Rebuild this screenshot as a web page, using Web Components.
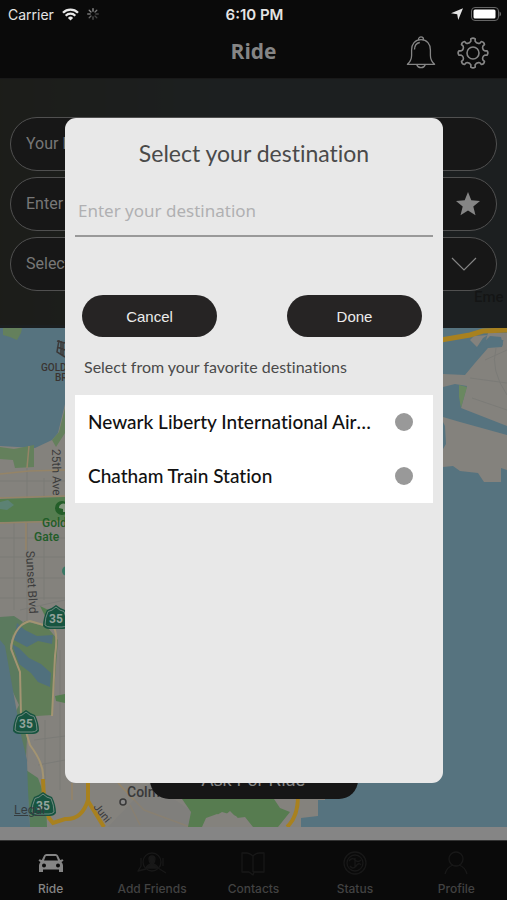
<!DOCTYPE html>
<html lang="en">
<head>
<meta charset="utf-8">
<meta name="viewport" content="width=device-width, initial-scale=1">
<title>Ride</title>
<style>
  html, body { margin: 0; height: 100%; background: #0a0a0a; }
  body { font-family: Roboto, "Liberation Sans", sans-serif; color: #858585; font-variant-ligatures: none; }
</style>
</head>
<body>
<ride-app></ride-app>

<template id="t-app">
  <style>
    :host { display: flex; flex-direction: column; min-height: 100vh; position: relative; }
    main { flex: 1; display: grid; grid-template-rows: 1fr; background: #858585; padding-bottom: 13px; }
    main > * { grid-area: 1 / 1; }
    .layer { display: flex; flex-direction: column; justify-content: space-between; z-index: 1; }
    form { display: flex; flex-direction: column; gap: 6px; padding: 38px 10px 37px; background: rgba(22, 23, 23, .91); }
    .foot { display: grid; grid-template-columns: 1fr auto 1fr; align-items: end; padding: 0 0 28px; }
    .ask { grid-column: 2; }
    .scrim { position: absolute; inset: 0; z-index: 2; display: flex; padding: 118px 64px 117px 65px; }
    destination-dialog { flex: 1; min-width: 0; }
  </style>
  <phone-status></phone-status>
  <nav-header>Ride</nav-header>
  <main>
    <city-map></city-map>
    <div class="layer">
      <form>
        <ride-field label="Your location"></ride-field>
        <ride-field label="Enter destination" icon="star"></ride-field>
        <ride-field label="Select" icon="chevron"></ride-field>
      </form>
      <div class="foot"><pill-button class="ask" kind="ask">Ask For Ride</pill-button></div>
    </div>
  </main>
  <tab-bar>
    <tab-item icon="car" active>Ride</tab-item>
    <tab-item icon="friends">Add Friends</tab-item>
    <tab-item icon="book">Contacts</tab-item>
    <tab-item icon="status">Status</tab-item>
    <tab-item icon="person">Profile</tab-item>
  </tab-bar>
  <div class="scrim"><destination-dialog></destination-dialog></div>
</template>

<template id="t-status">
  <style>
    :host { display: grid; grid-template-columns: 1fr auto 1fr; align-items: center; height: 28px; padding: 0 6px 0 8px; background: #0a0a0a; color: #e4e4e4; font: 14px Inter, "Liberation Sans", sans-serif; }
    div { display: flex; align-items: center; gap: 8px; }
    .end { justify-content: flex-end; }
    b { font-weight: 600; font-size: 15px; }
    svg { display: block; }
  </style>
  <div>
    <span>Carrier</span>
    <svg width="17" height="13" viewBox="0 0 17 13" fill="none" stroke="#e8e8e8" stroke-width="2.3"><path d="M1 4.8a10.6 10.6 0 0 1 15 0M3.7 7.7a6.8 6.8 0 0 1 9.6 0"/><path d="M8.5 12.6 5.9 9.900a3.700 3.700 0 0 1 5.200 0z" fill="#e8e8e8" stroke="none"/></svg>
    <svg width="12" height="12" viewBox="-6 -6 12 12" stroke="#999" stroke-width="1.3" stroke-linecap="round"><path d="M0-2.8V-5.3"/><path d="M2-2 3.8-3.8" stroke="#777"/><path d="M2.8 0H5.3" stroke="#444"/><path d="M2 2 3.8 3.8" stroke="#444"/><path d="M0 2.8V5.3" stroke="#555"/><path d="M-2 2-3.8 3.8" stroke="#666"/><path d="M-2.8 0H-5.3" stroke="#777"/><path d="M-2-2-3.8-3.8" stroke="#888"/></svg>
  </div>
  <b>6:10 PM</b>
  <div class="end">
    <svg width="12" height="12" viewBox="0 0 12 12" fill="#e4e4e4"><path d="M12 .2 7.200 12 6.200 6.200 0 5.200z"/></svg>
    <svg width="30" height="14" viewBox="0 0 30 14"><rect x=".5" y=".5" width="27" height="13" rx="3.500" fill="none" stroke="#666"/><rect x="2.500" y="2.500" width="22" height="9" rx="1.500" fill="#fff"/><path d="M28.500 4.500a2.800 2.800 0 0 1 0 5z" fill="#666"/></svg>
  </div>
</template>

<template id="t-nav">
  <style>
    :host { display: grid; grid-template-columns: 1fr auto 1fr; align-items: center; height: 51px; padding: 0 17px; background: #0a0a0a; border-bottom: 1px solid #191919; box-sizing: border-box; }
    h1 { grid-column: 2; margin: 0; padding-bottom: 4px; font: 700 21px/28px "Open Sans", "Noto Sans", sans-serif; color: #858585; }
    div { display: flex; justify-content: flex-end; gap: 20px; }
    button { padding: 0; border: 0; background: none; color: #858585; }
    svg { display: block; }
  </style>
  <h1><slot></slot></h1>
  <div>
    <button aria-label="Notifications"><svg width="30" height="34" viewBox="0 0 30 34" fill="none" stroke="currentColor" stroke-width="1.3" stroke-linejoin="round"><path d="M12.500 4.300V3.400a2.500 2.500 0 0 1 5 0v.9M15 3.700c-6 0-9.400 4.400-9.400 10.200v5.600c0 4-1.600 6.500-4.200 8.800h27.200c-2.600-2.300-4.200-4.800-4.200-8.800v-5.600C24.400 8.100 21 3.700 15 3.700zM10.700 28.500a4.500 4.500 0 0 0 8.600 0M8.500 13.500c0-3.400 2-6.400 5.300-7"/></svg></button>
    <button aria-label="Settings"><svg id="gear" width="34" height="34" viewBox="-17 -17 34 34" fill="none" stroke="currentColor" stroke-width="1.6" stroke-linejoin="round"><path d=""/><circle r="6"/></svg></button>
  </div>
</template>

<template id="t-field">
  <style>
    :host { display: flex; align-items: center; box-sizing: border-box; height: 54px; padding: 0 15px; border: 1px solid #505050; border-radius: 27px; background: #171717; }
    input, select { flex: 1; min-width: 0; height: 38px; padding: 0 0 2px; border: 0; outline: 0; appearance: none; background: none; color: #777; font: 16px Roboto, sans-serif; }
    input::placeholder { color: #777; opacity: 1; }
    button { padding: 0; border: 0; background: none; }
    svg { display: block; }
  </style>
</template>

<template id="t-pill">
  <style>
    :host { display: block; }
    button { display: block; box-sizing: border-box; width: 135px; height: 42px; padding: 0; border: 0; border-radius: 21px; background: #262424; color: #ececec; font: 15px "Liberation Sans", Arial, sans-serif; }
    :host([kind=ask]) button { width: 208px; height: 38px; border-radius: 19px; background: #161616; color: #858585; font-size: 18px; }
  </style>
  <button type="button"><slot></slot></button>
</template>

<template id="t-tabs">
  <style>
    :host { display: grid; grid-template-columns: repeat(5, 1fr); height: 60px; background: #0a0a0a; border-top: 1px solid #333; box-sizing: border-box; }
  </style>
  <slot></slot>
</template>

<template id="t-tab">
  <style>
    :host { display: block; color: #424242; --ink: #181818; }
    :host([active]) { color: #858585; --ink: #858585; }
    a { display: flex; flex-direction: column; align-items: center; gap: 5px; padding-top: 7px; color: inherit; text-decoration: none; font: 500 12px/16px Inter, sans-serif; white-space: nowrap; }
    svg { display: block; color: var(--ink); }
  </style>
</template>

<template id="t-dialog">
  <style>
    :host { display: flex; flex-direction: column; box-sizing: border-box; padding: 20px 10px; border-radius: 11px; background: #e8e8e8; font-family: Lato, sans-serif; color: #4a4a4a; }
    h2 { margin: 0; text-align: center; font: 400 23px/30px Lato, sans-serif; font-variant-ligatures: none; }
    input { box-sizing: border-box; width: 100%; height: 51px; margin-top: 18px; padding: 0 3px; border: 0; border-bottom: 2px solid #999; outline: 0; background: none; font: 17px "Noto Sans", sans-serif; }
    input::placeholder { color: #b0b0b2; opacity: 1; }
    .actions { display: flex; justify-content: space-between; padding: 58px 11px 0 7px; }
    p { margin: 20px 0 18px; padding: 0 9px; font-size: 16px; line-height: 20px; }
  </style>
  <h2 id="title">Select your destination</h2>
  <input type="text" aria-labelledby="title" placeholder="Enter your destination">
  <div class="actions"><pill-button>Cancel</pill-button><pill-button>Done</pill-button></div>
  <p>Select from your favorite destinations</p>
  <favorite-list></favorite-list>
</template>

<template id="t-favorites">
  <style>
    :host { display: block; background: #fff; color: #111; }
    label { display: flex; align-items: center; gap: 18px; height: 54px; padding: 0 20px 0 13px; font: 500 19px/26px Lato, sans-serif; font-variant-ligatures: none; }
    span { flex: 1; min-width: 0; overflow: hidden; white-space: nowrap; text-overflow: ellipsis; }
    input { appearance: none; flex: none; width: 18px; height: 18px; margin: 0; border-radius: 50%; background: #999; }
    input:checked { background: #262424; }
  </style>
  <label><span>Newark Liberty International Airport</span><input type="radio" name="favorite"></label>
  <label><span>Chatham Train Station</span><input type="radio" name="favorite"></label>
</template>

<template id="t-map">
  <style>
    :host { display: block; position: relative; overflow: hidden; min-height: 0; background: #56737f; }
    svg { position: absolute; inset: 0; width: 100%; height: 100%; display: block; }
    .legal { position: absolute; left: 14px; bottom: 9px; color: #353c3f; font: 12px/16px Inter, sans-serif; }
  </style>
  <svg viewBox="0 79 507 748" preserveAspectRatio="xMidYMid slice" font-family="Roboto, sans-serif">
    <defs><linearGradient id="hill"><stop offset="0" stop-color="#5c5a35"/><stop offset="1" stop-color="#56737f"/></linearGradient></defs>
    <rect y="79" width="507" height="748" fill="#56737f"/>
    <path d="M0 79H240V325H0z" fill="url(#hill)"/>
    <path d="M3 328h19l-1 5-4 7-7-3-7-2z" fill="#64805c"/>
    <!-- peninsula -->
    <path d="M0 446 35 448 52 440 58 433 65 404 V400 H325 V800 L318 800 V816 L301 818 V827 H30 L24 790 12 690 0 640z" fill="#84827d"/>
    <path d="M0 447 14 449 34 445 34 467 15 468 13 460 0 459z" fill="#64805c"/>
    <path d="M52 440 59 432 65 408V433l-9 14z" fill="#64805c"/>
    <g stroke="#7b7b77" fill="none"><path d="M27 468V827M44 478V600M0 481H65M0 538H65M0 557H65M0 578H65M0 598H65M14 522V610M34 740 65 736M38 765 65 760M45 780V720M60 650V790M20 610 65 600"/></g>
    <path d="M0 474 29 471 65 470M27 468 29 446M0 498 65 496M26 523V550" fill="none" stroke="#958467" stroke-width="1.5"/>
    <path d="M0 499 65 497V521L0 522z" fill="#557d50"/>
    <path d="M0 502 8 500 14 505 7 510 0 509z" fill="#5c8274"/>
    <path d="M0 523 65 521" stroke="#958467" stroke-width="1.5"/>
    <!-- lake area -->
    <path d="M0 617 14 616 23 622 13 634 10 646 15 660 22 680 24 716 27 738 26 756 22 752 14 722 13 695 0 642z" fill="#5b7a5e"/>
    <path d="M13 632 25 621 47 627 58 640 52 715 22 717 21 680 12 648z" fill="#607d58"/>
    <path d="M40 606 65 618V623L48 622z" fill="#557d50"/>
    <path d="M17 623 25 630 37 636 53 635 52 644 38 641 27 647 14 640zM12 644 19 648 29 658 41 664 51 673 50 687 38 682 31 673 19 664z" fill="#50707d"/>
    <path d="M11 649C12 638 17 624 30 621L54 628Q58 635 55 656L52 716M11 649 20 672 21 715 30 745Q45 765 43 780" fill="none" stroke="#a39472" stroke-width="2"/>
    <path d="M12 690 19 705 15 713zM23 759 35 765 39 790 33 783 25 777z" fill="#84827d"/>
    <path d="M26 770 38 778 46 800 47 827H30z" fill="#577c59"/>
    <path d="M0 640 5 646 14 696 21 735 27 760 28 790 30 827H0z" fill="#56737f"/>
    <path d="M55 696 65 694V703L56 701z" fill="#557d50"/>
    <path d="M43 779 44 800 49 818 53 823 65 819Q82 820 88 800V775M88 801 104 827" fill="none" stroke="#a8811f" stroke-width="4"/>
    <path d="M72 783V800M118 783 144 810 190 827M130 805 140 825" fill="none" stroke="#958467" stroke-width="1.5"/>
    <path d="M108 827 150 783 215 827z" fill="#7b7b7b" opacity=".5"/>
    <path d="M180 796H272L280 808 290 812 278 827H246L236 816 222 812 210 819 203 827H188L191 812z" fill="#577c50"/>
    <path d="M202 827 206 818 217 814 223 817 230 811 237 818 245 817 253 827z" fill="#84827d"/>
    <path d="M298 796Q298 817 287 827" fill="none" stroke="#a8811f" stroke-width="4"/>
    <!-- east shore -->
    <path d="M443 374 465 375 475 363 488 348 502 347 504 337 507 336V426L461 408 467 386 455 384 443 387z" fill="#84827d"/>
    <path d="M470 340 477 347 483 338 488 335 474 336zM488 333H507V340H486z" fill="#84827d"/>
    <path d="M485 341 490 336 501 337 503 345 500 347H487L480 356 474 350z" fill="#56737f"/>
    <path d="M443 417 460 422 507 435V470L501 468V482H484L478 473 460 471 453 466 443 467V449L446 444 445 426 443 422z" fill="#84827d"/>
    <path d="M459 385 467 387 461 408 459 397z" fill="#6a8860"/>
    <g stroke="#7b7b77" fill="none"><path d="M470 378 507 383M485 360 507 350M496 348Q490 370 507 395M472 398 507 410"/></g>
    <path d="M435 341 470 335 483 331 507 330" fill="none" stroke="#a8811f" stroke-width="5"/>
    <g fill="none" stroke="#3c3837" stroke-width="1.5"><path d="M57 341 65 343M59 340 57 352 65 357M61 341V354M63 342V356M57 347 65 350"/></g>
    <g font-size="10" font-weight="500" fill="#3a3431"><text x="41" y="371">GOLD</text><text x="55" y="381">BR</text></g>
    <g font-size="12" fill="#3c3c3c"><text transform="translate(52 449) rotate(89)">25th Ave</text><text transform="translate(26 551) rotate(87)">Sunset Blvd</text><text transform="translate(93 807) rotate(52)" font-size="11">Juni</text></g>
    <circle cx="62" cy="508" r="7" fill="#245e29"/><path d="M59 508a4 4 0 0 1 7-3v7h-3v-3z" fill="#84977f"/>
    <g font-size="12" font-weight="500" fill="#215d28"><text x="42" y="527">Gold</text><text x="34" y="541">Gate</text></g>
    <circle cx="67" cy="571" r="5" fill="#387865"/>
    <text x="127" y="797" font-size="14" font-weight="500" fill="#393939">Colma</text>
    <circle cx="123" cy="802" r="3" fill="#888" stroke="#393939" stroke-width="1.5"/>
    <g id="shields"></g>
    <text x="474" y="302" font-size="15" font-weight="500" fill="#000">Eme</text>
  </svg>
  <a class="legal" href="#legal">Legal</a>
</template>

<script>
const stamp = (host, id) => {
  const root = host.attachShadow({ mode: 'open' });
  root.append(document.getElementById(id).content.cloneNode(true));
  return root;
};
const simple = (name, id) => customElements.define(name, class extends HTMLElement {
  constructor() { super(); stamp(this, id); }
});

const fieldIcons = {
  star: '<button type="button" aria-label="Favorites"><svg width="26" height="26" viewBox="0 0 26 26" fill="#858585"><path d="M13 1l3.300 8.300 8.700.6-6.700 5.600 2.200 8.700L13 19.500l-7.500 4.700 2.200-8.700L1 9.900l8.700-.6z"/></svg></button>',
  chevron: '<svg width="32" height="16" viewBox="0 0 32 16" fill="none" stroke="#858585" stroke-width="1.2"><path d="M3 2l12 12L27 2"/></svg>'
};
const svg = body => `<svg width="32" height="28" viewBox="0 0 32 28" fill="none" stroke="currentColor" stroke-width="1.3" stroke-linejoin="round" aria-hidden="true">${body}</svg>`;
const tabIcons = {
  car: svg('<g fill="currentColor" stroke="none"><path fill-rule="evenodd" d="M9 7.500Q9.700 6 11.500 6h9q1.800 0 2.500 1.500L25.200 12l2.300-.8 1 1.500-2 1.200Q28 15.500 28 17.500V24h-4v-2.500H8V24H4v-6.500q0-2 1.500-3.600l-2-1.200 1-1.500 2.300.8zM10.800 8 9 12.500h14L21.200 8zM9 15.500a2 2 0 1 0 0 4 2 2 0 0 0 0-4zm14 0a2 2 0 1 0 0 4 2 2 0 0 0 0-4z"/></g>'),
  friends: svg('<circle cx="16" cy="14" r="9"/><path d="M22 20l8 5M10 21l-8 2 3-5V10M27 10v8"/><path d="M16 8a3 3 0 0 1 3 3q0 3-2 5 4 1 5 4H10q1-3 5-4-2-2-2-5a3 3 0 0 1 3-3z" fill="currentColor"/>'),
  book: svg('<path d="M16 8q-4-3-6-3H5v19h7l4 3 1-3h10V5h-5q-3 0-6 3zv16"/>'),
  status: svg('<circle cx="16" cy="15" r="11"/><circle cx="16" cy="15" r="8"/><path d="M10 13q3-4 6-1t6 0M11 18q3 4 6 0t5-1M16 10v9"/>'),
  person: svg('<circle cx="16" cy="11" r="7"/><path d="M5 26q2-7 8-9M27 26q-2-7-8-9"/>')
};

simple('phone-status', 't-status');
simple('tab-bar', 't-tabs');
simple('pill-button', 't-pill');
simple('favorite-list', 't-favorites');
simple('destination-dialog', 't-dialog');

customElements.define('nav-header', class extends HTMLElement {
  constructor() {
    super();
    const root = stamp(this, 't-nav');
    const at = (r, deg) => `${(r * Math.sin(deg * Math.PI / 180)).toFixed(2)} ${(-r * Math.cos(deg * Math.PI / 180)).toFixed(2)}`;
    let d = '';
    for (let a = 0; a < 360; a += 45) {
      d += `${a ? 'L' : 'M'}${at(12, a - 10)} L${at(14.2, a - 9)} Q${at(15.8, a)} ${at(14.2, a + 9)} L${at(12, a + 10)} Q${at(9.6, a + 22.5)} ${at(12, a + 35)} `;
    }
    root.querySelector('#gear path').setAttribute('d', d + 'Z');
  }
});

customElements.define('ride-field', class extends HTMLElement {
  connectedCallback() {
    if (this.shadowRoot) return;
    const root = stamp(this, 't-field');
    const label = this.getAttribute('label'), icon = this.getAttribute('icon');
    const control = icon === 'chevron'
      ? `<select aria-label="${label}"><option>${label}</option></select>`
      : `<input type="text" aria-label="${label}" placeholder="${label}">`;
    root.append(document.createRange().createContextualFragment(control + (fieldIcons[icon] || '')));
  }
});

customElements.define('tab-item', class extends HTMLElement {
  connectedCallback() {
    if (this.shadowRoot) return;
    const root = stamp(this, 't-tab');
    root.append(document.createRange().createContextualFragment(
      `<a href="#">${tabIcons[this.getAttribute('icon')]}<span><slot></slot></span></a>`));
  }
});

customElements.define('city-map', class extends HTMLElement {
  constructor() {
    super();
    const root = stamp(this, 't-map');
    root.querySelector('#shields').innerHTML = [[56, 618], [26, 723], [43, 805]].map(([x, y]) =>
      `<g transform="translate(${x} ${y})"><path d="M0-13Q5-9 9-8 13 0 13 8 11 11 7 11H-7Q-11 11-13 8-13 0-9-8-5-9 0-13z" fill="#175440"/><path d="M0-11Q4-7 8-6.500 11 0 11 7 9 9 6 9H-6Q-9 9-11 7-11 0-8-6.500-4-7 0-11z" fill="none" stroke="#718a80"/><text y="5" text-anchor="middle" font-size="12" font-weight="700" fill="#93a39c">35</text></g>`).join('');
  }
});

simple('ride-app', 't-app');
</script>
</body>
</html>
